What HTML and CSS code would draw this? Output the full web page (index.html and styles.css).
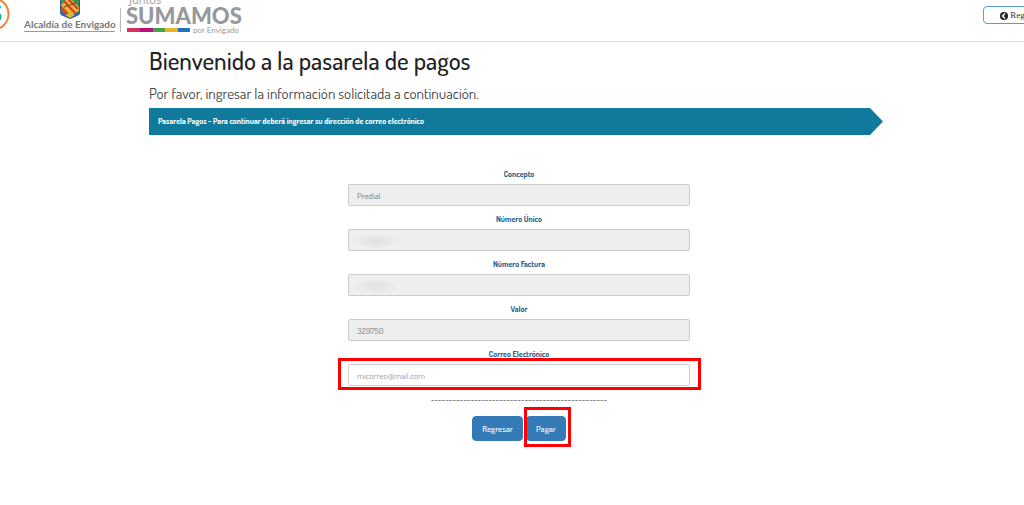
FILE: index.html
```html
<!DOCTYPE html>
<html lang="es">

<head>
    <meta charset="UTF-8" />
    <meta name="viewport" content="width=device-width, initial-scale=1.0" />
    <title>Pasarela de pagos - Alcaldía de Envigado</title>
    <link rel="stylesheet" href="styles.css">
</head>

<body>
    <header class="topbar">
        <svg class="logo" width="246" height="41" viewBox="0 0 246 41" role="img" aria-label="Alcaldía de Envigado, Juntos Sumamos por Envigado">
            <circle cx="-7" cy="14" r="15.5" fill="#fff" stroke="#f58238" stroke-width="2" />
            <text x="-10" y="22" class="logo-s">S</text>
            <!-- escudo -->
            <path d="M60-3H80V12Q80 15 77 16L70 19L63 16Q60 15 60 12Z" fill="#2c5b93" />
            <path d="M61-3H79V11L70 16L61 11Z" fill="#e9b431" />
            <path d="M61-3H65V2L61 5Z" fill="#4a9a55" />
            <path d="M61 5L70 15L67 15L61 11Z" fill="#d8452e" />
            <path d="M70-3H79V7L70-2Z" fill="#3d8f56" />
            <path d="M64 1L75 13M67-2L78 9" stroke="#c9402c" stroke-width="2" />
            <path d="M64 7L76 3" stroke="#76472c" stroke-width="1" />
            <path d="M60 11Q70 19 80 11V14Q70 20 60 14Z" fill="#346aa2" />
            <path d="M65 15L70 13L75 15L70 18Z" fill="#e2b63a" />
            <text x="24" y="28" class="logo-city">Alcaldía de Envigado</text>
            <rect x="24" y="31" width="91" height="1" fill="#999" />
            <rect x="120" y="8" width="1" height="24" fill="#bbb" />
            <text x="129" y="4" class="logo-juntos">Juntos</text>
            <text x="126" y="24" class="logo-sumamos">SUMAMOS</text>
            <rect x="127" y="28" width="13" height="4" fill="#d3305b" />
            <rect x="140" y="28" width="13" height="4" fill="#b90f7d" />
            <rect x="153" y="28" width="12" height="4" fill="#4aa147" />
            <rect x="165" y="28" width="13" height="4" fill="#e9b52b" />
            <rect x="178" y="28" width="12" height="4" fill="#1b76bb" />
            <text x="193" y="33" class="logo-por">por Envigado</text>
        </svg>
        <button type="button" class="btn-back">
            <svg width="8" height="8" viewBox="0 0 16 16" aria-hidden="true">
                <circle cx="8" cy="8" r="8" fill="#222" />
                <path d="M10 3L5 8L10 13" fill="none" stroke="#fff" stroke-width="3" />
            </svg>
            Regresar
        </button>
    </header>

    <main class="container">
        <h1>Bienvenido a la pasarela de pagos</h1>
        <p class="lead">Por favor, ingresar la información solicitada a continuación.</p>
        <div class="step">Pasarela Pagos - Para continuar deberá ingresar su dirección de correo electrónico</div>

        <form class="pay-form">
            <div class="form-group">
                <label for="concepto">Concepto</label>
                <input type="text" id="concepto" value="Predial" disabled>
            </div>
            <div class="form-group">
                <label for="numero">Número Único</label>
                <input type="text" id="numero" class="redacted" disabled>
            </div>
            <div class="form-group">
                <label for="factura">Número Factura</label>
                <input type="text" id="factura" class="redacted" disabled>
            </div>
            <div class="form-group">
                <label for="valor">Valor</label>
                <input type="text" id="valor" value="329750" disabled>
            </div>
            <div class="form-group marked marked-field">
                <label for="correo">Correo Electrónico</label>
                <input type="email" id="correo" placeholder="micorreo@mail.com">
            </div>
            <div class="divider">-------------------------------------------------</div>
            <div class="actions">
                <button type="button" class="btn">Regresar</button>
                <div class="marked marked-btn">
                    <button type="submit" class="btn">Pagar</button>
                </div>
            </div>
        </form>
    </main>
</body>

</html>
```
FILE: styles.css
```css
* {
    box-sizing: border-box;
}

body {
    margin: 0;
    background: #fff;
    color: #222;
    font-family: Dosis, Lato, sans-serif;
}

.topbar {
    display: flex;
    justify-content: space-between;
    align-items: flex-start;
    border-bottom: 1px solid #ddd;
    overflow: hidden;
}

.logo {
    display: block;
    flex: none;
}

.logo-s {
    font: bold 22px Lato, sans-serif;
    fill: #20b25a;
}

.logo-city {
    font: bold 10px Lato, sans-serif;
    fill: #777;
}

.logo-juntos {
    font: 11px "Open Sans", sans-serif;
    fill: #999;
}

.logo-sumamos {
    font: 900 22px Lato, sans-serif;
    fill: #96989b;
}

.logo-por {
    font: 8px Lato, sans-serif;
    fill: #999;
}

.btn-back {
    flex: none;
    width: 80px;
    height: 18px;
    margin: 6px -39px 0 0;
    padding: 0 0 0 16px;
    background: #fff;
    border: 1px solid #5b9bd1;
    border-radius: 4px;
    color: #333;
    font: 9px "Liberation Serif", serif;
    text-align: left;
    white-space: nowrap;
}

.btn-back svg {
    vertical-align: middle;
}

.container {
    padding: 0 135px 32px 149px;
}

h1 {
    margin: 0;
    padding-top: 2px;
    font-size: 25px;
    line-height: 32px;
    font-weight: 500;
}

.lead {
    margin: 8px 0 4px;
    font-size: 15px;
    line-height: 20px;
    font-weight: 400;
    color: #444;
}

.step {
    margin-right: 6px;
    padding: 0 9px;
    background: #0f7a9c;
    clip-path: polygon(0 0, calc(100% - 13px) 0, 100% 50%, calc(100% - 13px) 100%, 0 100%);
    color: #fff;
    font-size: 8px;
    font-weight: bold;
    line-height: 27px;
}

.pay-form {
    width: 342px;
    max-width: 100%;
    margin: 33px auto 0;
    text-align: center;
}

.form-group label {
    display: block;
    color: #285e8e;
    font-size: 8px;
    font-weight: bold;
    line-height: 12px;
}

.form-group input {
    display: block;
    width: 100%;
    height: 22px;
    margin: 4px 0 7px;
    padding: 0 8px;
    background: #fff;
    border: 1px solid #ccc;
    border-radius: 2px;
    color: #777;
    font: 9px Dosis, Lato, sans-serif;
}

.form-group input::placeholder {
    color: #999;
}

.form-group input:disabled {
    background: #eee;
}

.form-group input.redacted {
    background: radial-gradient(ellipse 24px 8px at 27px 11px, #e0e0e0 0%, #eee 100%);
}

.divider {
    margin-bottom: 9px;
    font-size: 9px;
    line-height: 14px;
}

.actions {
    display: flex;
    justify-content: center;
    gap: 3px;
}

.btn {
    display: block;
    height: 25px;
    padding: 0 9px;
    background: #337ab7;
    border: 1px solid #337ab7;
    border-radius: 4px;
    color: #fff;
    font: 500 9px Dosis, Lato, sans-serif;
}

/* recuadros rojos de la guia */
.marked {
    position: relative;
}

.marked::after {
    content: "";
    position: absolute;
    border: 3px solid #f00;
    pointer-events: none;
}

.marked-field::after {
    inset: 10px -11px -4px -10px;
}

.marked-btn::after {
    inset: -9px -5px -6px -2px;
}
```
